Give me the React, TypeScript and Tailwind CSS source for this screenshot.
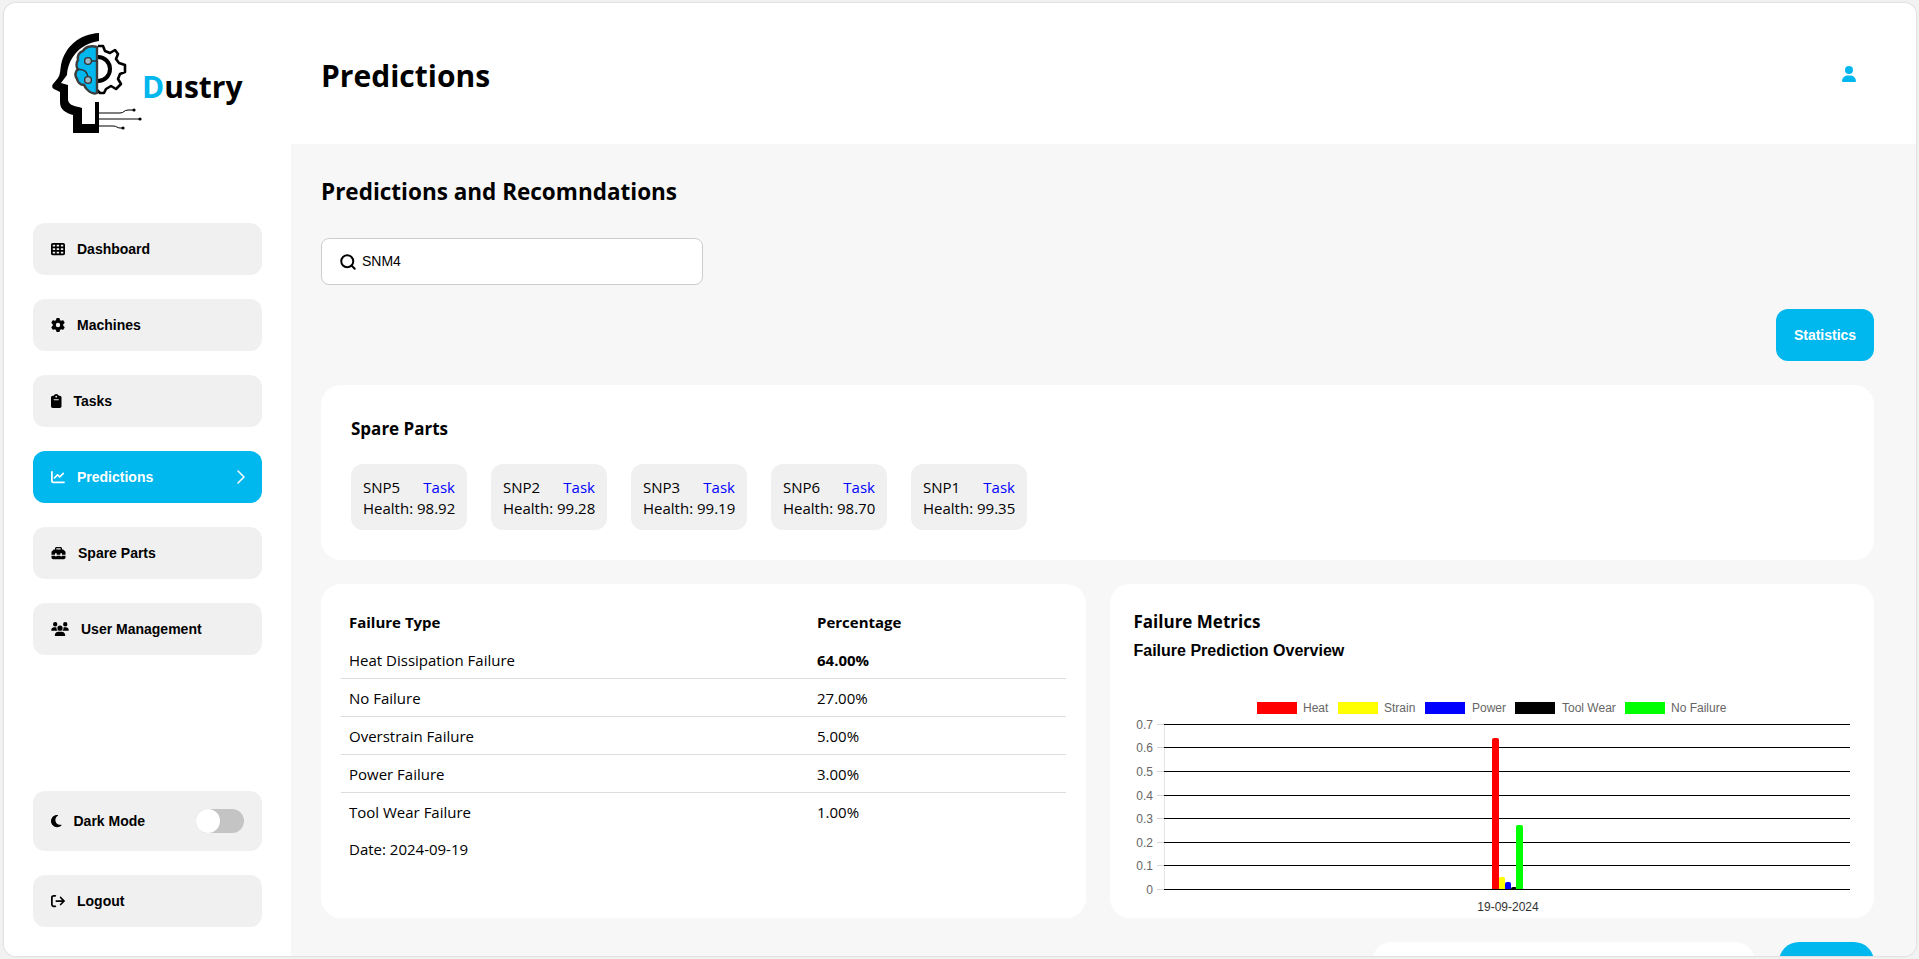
import type { ReactNode } from "react";
import { ChevronRight, Search } from "lucide-react";
import {
  FaArrowRightFromBracket,
  FaChartLine,
  FaClipboard,
  FaGear,
  FaMoon,
  FaTableCells,
  FaToolbox,
  FaUser,
  FaUsers,
} from "react-icons/fa6";

const navItems: { label: string; icon: ReactNode; active?: boolean }[] = [
  { label: "Dashboard", icon: <FaTableCells className="w-[14px] h-[14px]" /> },
  { label: "Machines", icon: <FaGear className="w-[14px] h-[14px]" /> },
  { label: "Tasks", icon: <FaClipboard className="w-[10.5px] h-[14px]" /> },
  { label: "Predictions", icon: <FaChartLine className="w-[14px] h-[14px]" />, active: true },
  { label: "Spare Parts", icon: <FaToolbox className="w-[15px] h-[14px]" /> },
  { label: "User Management", icon: <FaUsers className="w-[18px] h-[14px]" /> },
];

const spareParts = [
  { name: "SNP5", health: "98.92" },
  { name: "SNP2", health: "99.28" },
  { name: "SNP3", health: "99.19" },
  { name: "SNP6", health: "98.70" },
  { name: "SNP1", health: "99.35" },
];

const failures = [
  { type: "Heat Dissipation Failure", pct: "64.00%", strong: true },
  { type: "No Failure", pct: "27.00%" },
  { type: "Overstrain Failure", pct: "5.00%" },
  { type: "Power Failure", pct: "3.00%" },
  { type: "Tool Wear Failure", pct: "1.00%" },
];

// chart coordinates are local to the svg (734 x 226)
const gridLines = [
  { label: "0.7", y: 34.5 },
  { label: "0.6", y: 57.5 },
  { label: "0.5", y: 81.5 },
  { label: "0.4", y: 105.5 },
  { label: "0.3", y: 128.5 },
  { label: "0.2", y: 152.5 },
  { label: "0.1", y: 175.5 },
  { label: "0", y: 199.5 },
];

const legend = [
  { label: "Heat", color: "#ff0000", x: 123, tx: 169 },
  { label: "Strain", color: "#ffff00", x: 204, tx: 250 },
  { label: "Power", color: "#0000ff", x: 291, tx: 338 },
  { label: "Tool Wear", color: "#000000", x: 381, tx: 428 },
  { label: "No Failure", color: "#00ff00", x: 491, tx: 537 },
];

const bars = [
  { color: "#ff0000", x: 358, w: 7, top: 48 },
  { color: "#ffff00", x: 365, w: 6, top: 187 },
  { color: "#0000ff", x: 371, w: 6, top: 192 },
  { color: "#000000", x: 377, w: 6, top: 197 },
  { color: "#00ff00", x: 382, w: 7, top: 135 },
];

function Logo() {
  return (
    <svg viewBox="40 20 110 120" className="ml-[7px] w-[110px] h-[120px] shrink-0">
      <path
        d="M99 33C80 34 65 46 61 65C60 72 60 75 58 78L53 84C51 87 53 89 56 90L60 92V102C60 110 66 113 73 115V133H99V102H95V124H82V108C76 106 69 106 68 100V85L61 83L67 75C68 60 78 44 99 41Z"
        fill="#000"
      />
      <path
        d="M98 46L103 46L105 51L110 53L115 50L118 54L116 59L119 63L125 65V72L120 74L118 79L121 84L116 89L111 86L106 89L104 93H100L97 90"
        fill="none"
        stroke="#000"
        strokeWidth="2.6"
        strokeLinejoin="round"
      />
      <path d="M98 57A12 12 0 0 1 98 81" fill="none" stroke="#000" strokeWidth="4" />
      <path
        d="M97 47C91 45 85 47 83 51C79 52 77 56 78 60C76 63 76 67 78 69C75 72 75 76 77 79C78 83 81 85 84 85C86 90 92 95 97 93Z"
        fill="#00b7ee"
        stroke="#3d3d3d"
        strokeWidth="2.4"
      />
      <path d="M89 61H97M76 70C84 68 88 72 88 79" fill="none" stroke="#333" strokeWidth="1.4" />
      <circle cx="88" cy="61" r="3.4" fill="#9fb9c4" stroke="#333" strokeWidth="1.4" />
      <circle cx="88" cy="80" r="3.4" fill="#9fb9c4" stroke="#333" strokeWidth="1.4" />
      <path
        d="M99 113H120C124 113 124 110 128 110H134M99 119H139M99 126H113C117 126 117 128 120 128H123"
        fill="none"
        stroke="#000"
        strokeWidth="1"
      />
      <circle cx="134" cy="110" r="1.6" fill="#000" />
      <circle cx="140" cy="119" r="1.6" fill="#000" />
      <circle cx="123" cy="128" r="1.6" fill="#000" />
    </svg>
  );
}

function FailureChart() {
  return (
    <svg viewBox="0 0 734 226" className="w-[734px] h-[226px] mt-[26px] font-['Liberation_Sans',sans-serif]">
      {legend.map((l) => (
        <g key={l.label}>
          <rect x={l.x} y="12" width="40" height="12" fill={l.color} />
          <text x={l.tx} y="22" fontSize="12" fill="#666">
            {l.label}
          </text>
        </g>
      ))}
      <line x1="30.5" x2="30.5" y1="34" y2="200" stroke="#e5e5e5" />
      {gridLines.map((g) => (
        <g key={g.label}>
          <line x1="23" x2="30" y1={g.y} y2={g.y} stroke="#d4d4d4" />
          <line x1="30" x2="716" y1={g.y} y2={g.y} stroke="#000" />
          <text x="19" y={g.y + 4.5} fontSize="12" fill="#666" textAnchor="end">
            {g.label}
          </text>
        </g>
      ))}
      {bars.map((b) => (
        <path
          key={b.color}
          d={`M${b.x} 199V${b.top + 2}Q${b.x} ${b.top} ${b.x + 2} ${b.top}H${b.x + b.w - 2}Q${b.x + b.w} ${b.top} ${b.x + b.w} ${b.top + 2}V199Z`}
          fill={b.color}
        />
      ))}
      <text x="374" y="221" fontSize="12" fill="#333" textAnchor="middle">
        19-09-2024
      </text>
    </svg>
  );
}

export default function App() {
  return (
    <div className="h-screen bg-[#f2f2f2] pt-[3px] pb-[3px] pl-[4px] pr-[3px] font-['Open_Sans',sans-serif] text-black">
      <div className="flex h-full overflow-hidden rounded-[12px] bg-white shadow-[0_0_2px_rgba(0,0,0,0.25)]">
        <aside className="flex w-[287px] shrink-0 flex-col bg-white pl-[29px] pr-[29px] pb-[29px] font-['Liberation_Sans',sans-serif]">
          <div className="flex h-[220px] items-start pt-[17px]">
            <Logo />
            <span className="-ml-[8px] mt-[47px] font-['Open_Sans',sans-serif] text-[30px] font-bold leading-[40px]">
              <span className="text-[#00b7ee]">D</span>ustry
            </span>
          </div>
          <nav className="flex flex-col gap-[24px]">
            {navItems.map((item) => (
              <div
                key={item.label}
                className={
                  item.active
                    ? "flex h-[52px] items-center gap-[12px] rounded-[12px] bg-[#00b7ee] pl-[18px] pr-[18px] text-[14px] font-bold text-white"
                    : "flex h-[52px] items-center gap-[12px] rounded-[12px] bg-[#f0f0f0] pl-[18px] pr-[18px] text-[14px] font-bold"
                }
              >
                {item.icon}
                <span>{item.label}</span>
                {item.active && <ChevronRight className="ml-auto -mr-[9px] h-[24px] w-[24px]" strokeWidth={1.5} />}
              </div>
            ))}
          </nav>
          <div className="mt-auto flex flex-col gap-[24px]">
            <div className="flex h-[60px] items-center gap-[12px] rounded-[12px] bg-[#f0f0f0] pl-[18px] pr-[18px] text-[14px] font-bold">
              <FaMoon className="h-[14px] w-[10.5px]" />
              <span>Dark Mode</span>
              <div className="ml-auto h-[24px] w-[48px] rounded-full bg-[#c4c4c4]">
                <div className="h-[24px] w-[24px] rounded-full bg-white" />
              </div>
            </div>
            <div className="flex h-[52px] items-center gap-[12px] rounded-[12px] bg-[#f0f0f0] pl-[18px] pr-[18px] text-[14px] font-bold">
              <FaArrowRightFromBracket className="h-[14px] w-[14px]" />
              <span>Logout</span>
            </div>
          </div>
        </aside>

        <main className="flex min-w-0 flex-1 flex-col overflow-hidden bg-[#f7f7f7]">
          <header className="flex h-[141px] shrink-0 items-center justify-between bg-white pl-[30px] pr-[60px] pt-[5px]">
            <h1 className="text-[30px] font-bold leading-[40px]">Predictions</h1>
            <FaUser className="-mt-[5px] h-[16px] w-[14px] text-[#00b7ee]" />
          </header>

          <div className="pl-[30px] pr-[42px] pt-[32px]">
            <h2 className="text-[22.5px] font-bold leading-[32px]">Predictions and Recomndations</h2>

            <div className="mt-[30px] flex h-[47px] w-[382px] items-center gap-[5px] rounded-[8px] border border-[#cccccc] bg-white pl-[17px] font-['Liberation_Sans',sans-serif] text-[14px]">
              <Search className="h-[18px] w-[18px]" strokeWidth={2.6} />
              <span>SNM4</span>
            </div>

            <div className="mt-[24px] flex justify-end">
              <button className="h-[52px] w-[98px] rounded-[12px] bg-[#00b7ee] font-['Liberation_Sans',sans-serif] text-[14px] font-bold text-white">
                Statistics
              </button>
            </div>

            <section className="mt-[24px] h-[175px] rounded-[20px] bg-white pl-[30px] pt-[31px]">
              <h3 className="text-[17px] font-bold leading-[26px]">Spare Parts</h3>
              <div className="mt-[22px] flex gap-[24px]">
                {spareParts.map((part) => (
                  <div key={part.name} className="h-[66px] w-[116px] rounded-[12px] bg-[#f0f0f0] px-[12px] pt-[13px] text-[15px] leading-[21px]">
                    <div className="flex justify-between">
                      <span>{part.name}</span>
                      <span className="text-[#0000ff]">Task</span>
                    </div>
                    <div className="whitespace-nowrap">Health: {part.health}</div>
                  </div>
                ))}
              </div>
            </section>

            <div className="mt-[24px] grid h-[334px] grid-cols-2 gap-[24px]">
              <section className="rounded-[20px] bg-white pl-[20px] pr-[20px] pt-[20px]">
                <table className="w-full table-fixed border-collapse text-[15px]">
                  <thead>
                    <tr className="h-[36px] text-left">
                      <th className="w-[468px] pl-[8px] font-bold">Failure Type</th>
                      <th className="pl-[8px] font-bold">Percentage</th>
                    </tr>
                  </thead>
                  <tbody>
                    {failures.map((row, i) => (
                      <tr
                        key={row.type}
                        className={i < failures.length - 1 ? "h-[38px] border-b border-[#dddddd]" : "h-[38px]"}
                      >
                        <td className="pl-[8px] pt-[2px]">{row.type}</td>
                        <td className={row.strong ? "pl-[8px] pt-[2px] font-bold" : "pl-[8px] pt-[2px]"}>{row.pct}</td>
                      </tr>
                    ))}
                  </tbody>
                </table>
                <p className="mt-[9px] pl-[8px] text-[15px] leading-[20px]">Date: 2024-09-19</p>
              </section>

              <section className="rounded-[20px] bg-white pl-[24px] pt-[25px]">
                <h3 className="text-[17px] font-bold leading-[26px]">Failure Metrics</h3>
                <h4 className="mt-[3px] font-['Liberation_Sans',sans-serif] text-[16px] font-bold leading-[26px]">
                  Failure Prediction Overview
                </h4>
                <FailureChart />
              </section>
            </div>

            <div className="mt-[24px] flex justify-end gap-[24px]">
              <div className="h-[52px] w-[383px] rounded-[20px] bg-white" />
              <div className="h-[52px] w-[95px] rounded-[20px] bg-[#00b7ee]" />
            </div>
          </div>
        </main>
      </div>
    </div>
  );
}
